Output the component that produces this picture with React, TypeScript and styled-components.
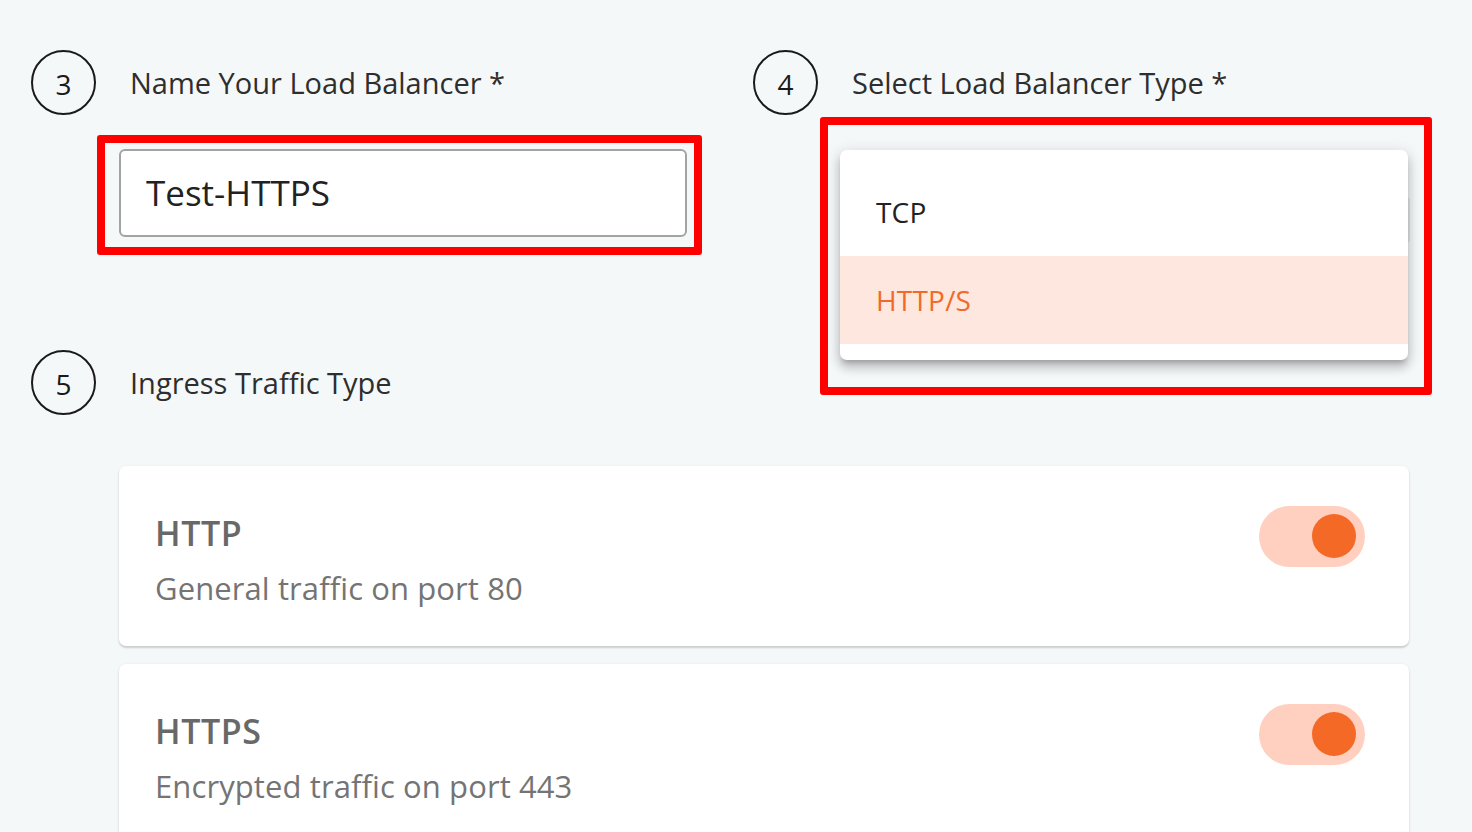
import { FC } from "react";
import styled, { createGlobalStyle } from "styled-components";

const GlobalStyle = createGlobalStyle`
  html, body {
    margin: 0;
    padding: 0;
    background: #f5f8f9;
    font-family: "Open Sans", "Noto Sans", sans-serif;
  }
  * { box-sizing: border-box; }
`;

const Page = styled.div`
  width: 1472px;
  height: 832px;
  overflow: hidden;
  padding: 50px 0 0 31px;
`;

const TopGrid = styled.div`
  display: grid;
  grid-template-columns: 722px 1fr;
`;

const Column = styled.div`
  display: flex;
  flex-direction: column;
`;

const StepHeader = styled.div<{ $gapTop?: number }>`
  display: flex;
  align-items: center;
  gap: 34px;
  height: 65px;
  margin-top: ${(p) => p.$gapTop ?? 0}px;
`;

const StepCircle = styled.div`
  width: 65px;
  height: 65px;
  border-radius: 50%;
  border: 2px solid #1a1a1a;
  display: flex;
  align-items: center;
  justify-content: center;
  font-size: 28px;
  color: #1a1a1a;
  padding-top: 3px;
`;

const StepLabel = styled.div`
  font-size: 29px;
  color: #2e2e2e;
`;

const Highlight = styled.div<{ $top: number; $left: number; $width: number; $height: number; $pad: string }>`
  margin-top: ${(p) => p.$top}px;
  margin-left: ${(p) => p.$left}px;
  width: ${(p) => p.$width}px;
  height: ${(p) => p.$height}px;
  border: 8px solid #ff0000;
  border-radius: 3px;
  padding: ${(p) => p.$pad};
  position: relative;
`;

const TextInput = styled.div`
  height: 88px;
  background: #fff;
  border: 2px solid #a3a3a3;
  border-radius: 6px;
  display: flex;
  align-items: center;
  padding: 0 0 2px 25px;
  font-size: 35px;
  color: #222;
`;

const Menu = styled.div`
  position: relative;
  background: #fff;
  border-radius: 7px;
  padding: 18px 0 16px;
  box-shadow: 0 5px 5px -3px rgba(0, 0, 0, 0.2),
    0 8px 10px 1px rgba(0, 0, 0, 0.14), 0 3px 14px 2px rgba(0, 0, 0, 0.12);
`;

const MenuItem = styled.div<{ $selected?: boolean }>`
  height: 88px;
  display: flex;
  align-items: center;
  padding-left: 36px;
  font-size: 28px;
  letter-spacing: 0.2px;
  color: ${(p) => (p.$selected ? "#f26a2a" : "#222")};
  background: ${(p) => (p.$selected ? "#fde7df" : "transparent")};
`;

const SelectEdge = styled.div`
  position: absolute;
  right: 14px;
  top: 72px;
  width: 4px;
  height: 46px;
  border-radius: 0 4px 4px 0;
  background: #e4e7e8;
`;

const Cards = styled.div`
  display: flex;
  flex-direction: column;
  gap: 18px;
  margin: 51px 0 0 88px;
  width: 1290px;
`;

const Card = styled.div`
  background: #fff;
  border-radius: 7px;
  height: 180px;
  padding: 45px 44px 0 36px;
  box-shadow: 0 2px 2px rgba(0, 0, 0, 0.16), 0 0 3px rgba(0, 0, 0, 0.06);
`;

const CardHead = styled.div`
  display: flex;
  align-items: center;
  justify-content: space-between;
  height: 44px;
`;

const CardTitle = styled.div`
  font-size: 34px;
  font-weight: 600;
  color: #686868;
  letter-spacing: 0.6px;
`;

const CardSub = styled.div`
  margin-top: 13px;
  font-size: 31px;
  color: #747474;
  line-height: 40px;
  letter-spacing: 0.1px;
`;

const Toggle = styled.div<{ $on: boolean }>`
  width: 106px;
  height: 61px;
  margin-top: 6px;
  border-radius: 31px;
  background: ${(p) => (p.$on ? "#ffd0bf" : "#ddd")};
  display: flex;
  align-items: center;
  justify-content: ${(p) => (p.$on ? "flex-end" : "flex-start")};
  padding: 0 9px;
  flex-shrink: 0;
`;

const Knob = styled.div`
  width: 44px;
  height: 44px;
  border-radius: 50%;
  background: #f36925;
`;

const traffic = [
  { title: "HTTP", desc: "General traffic on port 80", on: true },
  { title: "HTTPS", desc: "Encrypted traffic on port 443", on: true },
];

const App: FC = () => (
  <>
    <GlobalStyle />
    <Page>
      <TopGrid>
        <Column>
          <StepHeader>
            <StepCircle>3</StepCircle>
            <StepLabel>Name Your Load Balancer *</StepLabel>
          </StepHeader>
          <Highlight $top={20} $left={66} $width={605} $height={120} $pad="6px 7px 10px 14px">
            <TextInput>Test-HTTPS</TextInput>
          </Highlight>
          <StepHeader $gapTop={95}>
            <StepCircle>5</StepCircle>
            <StepLabel>Ingress Traffic Type</StepLabel>
          </StepHeader>
        </Column>
        <Column>
          <StepHeader>
            <StepCircle>4</StepCircle>
            <StepLabel>Select Load Balancer Type *</StepLabel>
          </StepHeader>
          <Highlight $top={2} $left={67} $width={612} $height={278} $pad="25px 16px 0 12px">
            <SelectEdge />
            <Menu>
              <MenuItem>TCP</MenuItem>
              <MenuItem $selected>HTTP/S</MenuItem>
            </Menu>
          </Highlight>
        </Column>
      </TopGrid>
      <Cards>
        {traffic.map((t) => (
          <Card key={t.title}>
            <CardHead>
              <CardTitle>{t.title}</CardTitle>
              <Toggle $on={t.on}>
                <Knob />
              </Toggle>
            </CardHead>
            <CardSub>{t.desc}</CardSub>
          </Card>
        ))}
      </Cards>
    </Page>
  </>
);

export default App;
